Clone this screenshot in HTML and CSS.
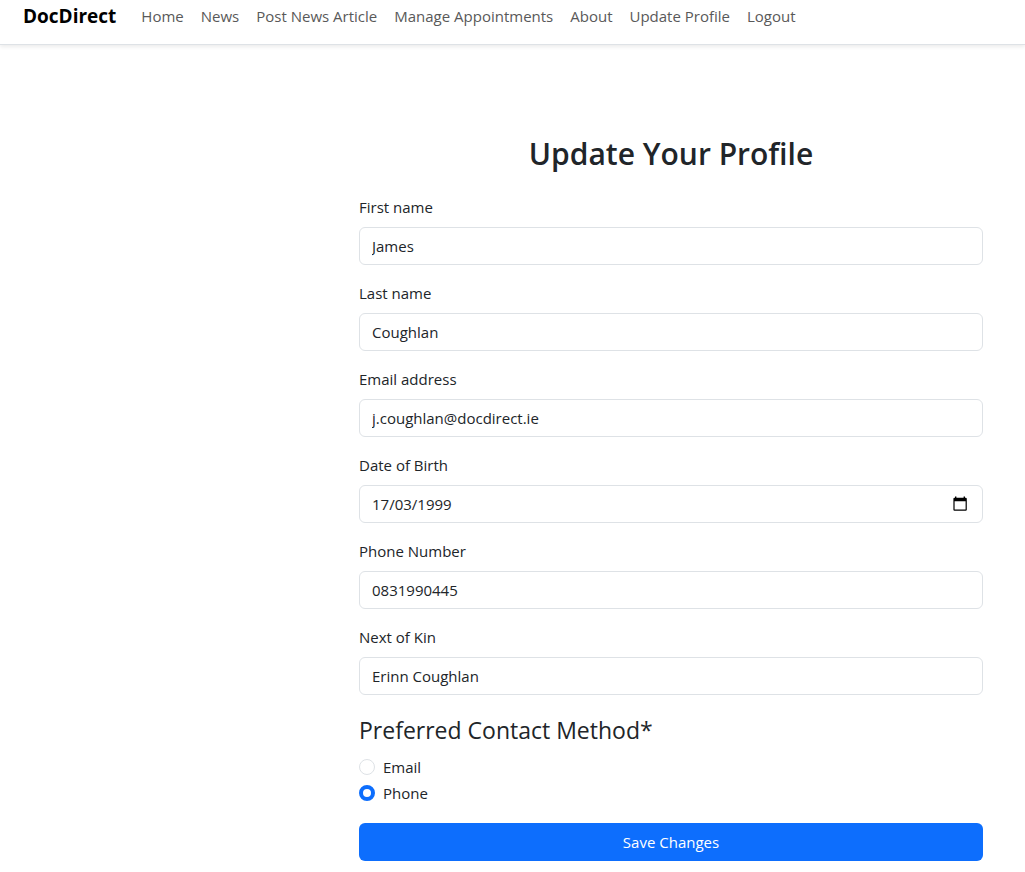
FILE: index.html
```html
<!DOCTYPE html>
<html lang="en">
<head>
<meta charset="utf-8">
<title>DocDirect</title>
<link rel="stylesheet" href="styles.css">
</head>
<body>
<nav class="navbar">
  <a class="brand" href="#">DocDirect</a>
  <a class="nav-link" href="#">Home</a>
  <a class="nav-link" href="#">News</a>
  <a class="nav-link" href="#">Post News Article</a>
  <a class="nav-link" href="#">Manage Appointments</a>
  <a class="nav-link" href="#">About</a>
  <a class="nav-link" href="#">Update Profile</a>
  <a class="nav-link" href="#">Logout</a>
</nav>
<main class="page">
  <form class="profile">
    <h1 class="title">Update Your Profile</h1>
    <div class="field">
      <label for="first">First name</label>
      <input class="control" id="first" type="text" value="James">
    </div>
    <div class="field">
      <label for="last">Last name</label>
      <input class="control" id="last" type="text" value="Coughlan">
    </div>
    <div class="field">
      <label for="email">Email address</label>
      <input class="control" id="email" type="email" value="j.coughlan@docdirect.ie">
    </div>
    <div class="field">
      <label for="dob">Date of Birth</label>
      <div class="control date">
        <input class="date-input" id="dob" type="text" value="17/03/1999">
        <button class="date-button" type="button" aria-label="Choose date">
          <svg width="16" height="16" viewBox="0 0 16 16"><path fill="#000" fill-rule="evenodd" d="M3 .4h1.4v1.3h7.2V.4H13v1.3h.7q1.1 0 1.1 1.1v10.9q0 1.1-1.1 1.1H2.5q-1.1 0-1.1-1.1V2.8q0-1.1 1.1-1.1H3zM2.6 5.2v8.400h11V5.200z"/></svg>
        </button>
      </div>
    </div>
    <div class="field">
      <label for="phone">Phone Number</label>
      <input class="control" id="phone" type="tel" value="0831990445">
    </div>
    <div class="field">
      <label for="kin">Next of Kin</label>
      <input class="control" id="kin" type="text" value="Erinn Coughlan">
    </div>
    <fieldset class="contact">
      <legend class="legend">Preferred Contact Method*</legend>
      <label class="choice"><input class="radio" type="radio" name="contact">Email</label>
      <label class="choice"><input class="radio" type="radio" name="contact" checked>Phone</label>
    </fieldset>
    <button class="save" type="submit">Save Changes</button>
  </form>
</main>
</body>
</html>
```
FILE: styles.css
```css
* { box-sizing: border-box; }
body {
  margin: 0;
  background: #fff;
  color: #212529;
  font: 16px/24px "Segoe UI", "Open Sans", "Noto Sans", sans-serif;
}
input, button { font: inherit; color: inherit; }
.navbar {
  display: flex;
  align-items: center;
  gap: 17px;
  padding: 4px 23px 16px;
  border-bottom: 1px solid #dee2e6;
  box-shadow: 0 2px 4px rgba(0, 0, 0, .08);
}
.brand {
  margin-right: 8px;
  color: #000;
  font-size: 19px;
  font-weight: 700;
  text-decoration: none;
}
.nav-link { color: #595959; text-decoration: none; white-space: nowrap; font-size: 15px; }
.page { padding: 89px 42px 11px 359px; }
.title {
  margin: 0 0 22px;
  font-size: 30px;
  font-weight: 600;
  line-height: 39px;
  text-align: center;
}
.field { margin-bottom: 16px; }
.field label { display: block; margin-bottom: 8px; font-size: 15px; }
.control {
  display: block;
  width: 100%;
  height: 38px;
  padding: 6px 12px;
  border: 1px solid #dee2e6;
  border-radius: 6px;
  background: #fff;
  font-size: 15px;
}
.date { display: flex; align-items: center; padding-right: 14px; }
.date-input { flex: 1; min-width: 0; padding: 0; border: 0; outline: 0; background: none; }
.date-button { display: flex; padding: 0; border: 0; background: none; }
.contact { margin: 0 0 16px; padding: 6px 0 0; border: 0; }
.legend { padding: 0; font-size: 23px; line-height: 38px; }
.choice { display: flex; align-items: center; gap: 8px; margin-bottom: 2px; font-size: 15px; }
.radio {
  appearance: none;
  width: 16px;
  height: 16px;
  margin: 0;
  border: 1px solid #dee2e6;
  border-radius: 50%;
  background: #fff;
}
.radio:checked { border: 4px solid #0d6efd; }
.save {
  display: block;
  width: 100%;
  height: 38px;
  border: 0;
  border-radius: 6px;
  background: #0d6efd;
  color: #fff;
  font-size: 15px;
}
```
